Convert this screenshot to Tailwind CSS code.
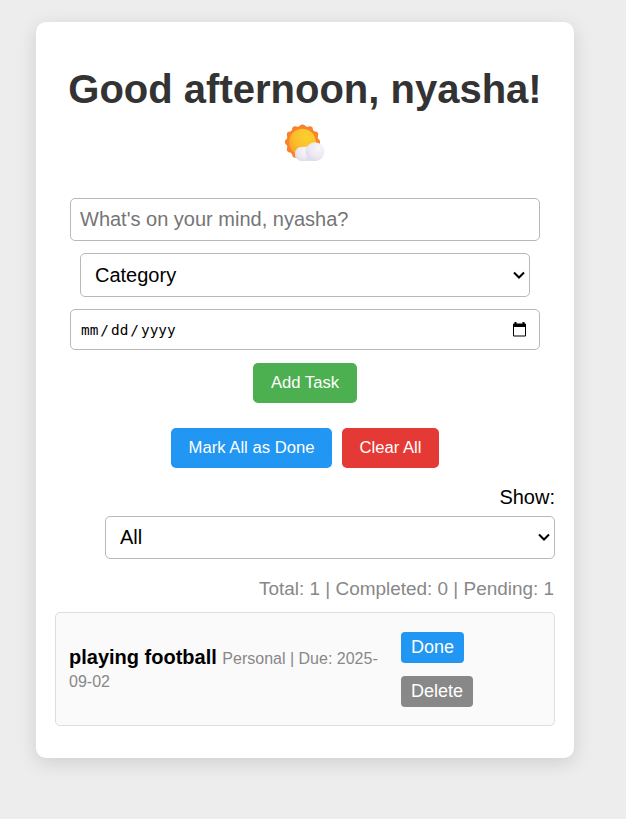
<!DOCTYPE html>
<html lang="en">
<head>
<meta charset="utf-8">
<title>To-do list</title>
<script src="https://cdn.jsdelivr.net/npm/@tailwindcss/browser@4"></script>
</head>
<body class="h-[819px] overflow-hidden bg-[#ededed] pt-[22px] pl-9 font-['Liberation_Sans',Arial,sans-serif] text-[20px] text-black">
<main class="flex h-[736px] w-[538px] flex-col rounded-[10px] bg-white px-[19px] shadow-[0_5px_19px_rgba(0,0,0,0.13)]">
  <h1 class="mt-[40px] flex flex-col items-center text-[40px] leading-[54px] font-bold whitespace-nowrap text-[#333]">
    <span>Good afternoon, nyasha!</span>
    <svg class="mt-[8px] block h-[38px] w-[42px]" viewBox="0 0 42 38">
      <defs>
        <radialGradient id="sun" cx=".65" cy=".3" r=".8"><stop offset="0" stop-color="#fdd02e"/><stop offset=".6" stop-color="#fabd2b"/><stop offset="1" stop-color="#f5a02d"/></radialGradient>
        <linearGradient id="cloud" x1="0" y1="0" x2="0" y2="1"><stop offset="0" stop-color="#f3f1f6"/><stop offset=".6" stop-color="#e7e3ef"/><stop offset="1" stop-color="#dcd5f2"/></linearGradient>
        <radialGradient id="puff" cx=".7" cy=".3" r=".85"><stop offset="0" stop-color="#f7f6f9"/><stop offset=".6" stop-color="#ebe8f0"/><stop offset="1" stop-color="#dbd5ea"/></radialGradient>
      </defs>
      <g fill="#f9822a"><circle cx="18.500" cy="18" r="16"/><circle cx="18.500" cy="3.500" r="3.100"/><circle cx="25.800" cy="5.400" r="3.100"/><circle cx="31.100" cy="10.700" r="3.100"/><circle cx="33" cy="18" r="3.100"/><circle cx="11.200" cy="5.400" r="3.100"/><circle cx="5.900" cy="10.700" r="3.100"/><circle cx="4" cy="18" r="3.100"/><circle cx="5.900" cy="25.300" r="3.100"/><circle cx="11.200" cy="30.600" r="3.100"/></g>
      <circle cx="18.500" cy="18" r="13.300" fill="url(#sun)"/>
      <path d="M17.500 37a7 7 0 0 1-6.500-7c0-4.200 3-7 6.700-7l13-1 6 12-5 3z" fill="url(#cloud)"/>
      <circle cx="18" cy="29.900" r="7" fill="url(#puff)"/>
      <path d="M18 37c5 0 5-7 10-9l8 5-3 4z" fill="#e3deef"/>
      <circle cx="31" cy="27.600" r="9.400" fill="url(#puff)"/>
    </svg>
  </h1>

  <form class="mt-[36px] flex flex-col items-center">
    <input type="text" placeholder="What's on your mind, nyasha?" class="h-[43px] w-[470px] rounded-[5px] border border-[#b8b8b8] bg-white px-[9px] text-[20px] text-black placeholder:text-[#757575]">
    <div class="mt-[12px] flex h-[44px] w-[450px] items-center justify-between rounded-[5px] border border-[#b8b8b8] pr-[4px] pl-[14px]">
      <span>Category</span>
      <svg class="h-3 w-3" viewBox="0 0 12 12" fill="none" stroke="#000" stroke-width="2"><path d="M1 3.500 6 8.500 11 3.500"/></svg>
    </div>
    <div class="mt-[12px] flex h-[41px] w-[470px] items-center justify-between rounded-[5px] border border-[#b8b8b8] pr-[12px] pl-[10px]">
      <span class="pt-[3px] font-['DejaVu_Sans_Mono',monospace] text-[14.4px]">mm<span class="px-[2px]">/</span>dd<span class="px-[2px]">/</span>yyyy</span>
      <svg class="h-4 w-[15px]" viewBox="0 0 15 16"><path d="M2.500 0h2v1.500h6V0h2v1.500h.5a1 1 0 0 1 1 1v11a1 1 0 0 1-1 1H2a1 1 0 0 1-1-1v-11a1 1 0 0 1 1-1h.5zM2 5v8.500h11V5z" fill="#000"/></svg>
    </div>
    <button type="button" class="mt-[13px] h-10 w-[104px] rounded-[5px] bg-[#4caf50] pb-[2px] text-[16.67px] text-white">Add Task</button>
  </form>

  <div class="mt-[25px] flex justify-center gap-[10px] text-[16.67px] text-white">
    <button class="h-10 w-[161px] rounded-[5px] bg-[#2196f3] pb-[2px]">Mark All as Done</button>
    <button class="h-10 w-[97px] rounded-[5px] bg-[#e53935] pb-[2px]">Clear All</button>
  </div>

  <div class="mt-[17px] flex flex-col items-end">
    <span class="leading-[24px]">Show:</span>
    <div class="mt-[7px] flex h-[43px] w-[450px] items-center justify-between rounded-[5px] border border-[#b8b8b8] pr-[4px] pb-px pl-[14px]">
      <span>All</span>
      <svg class="h-3 w-3" viewBox="0 0 12 12" fill="none" stroke="#000" stroke-width="2"><path d="M1 3.500 6 8.500 11 3.500"/></svg>
    </div>
    <p class="mt-[18px] pr-px text-[18.930px] leading-[24px] text-[#888]">Total: 1 | Completed: 0 | Pending: 1</p>
  </div>

  <div class="mt-[11px] flex h-[114px] items-center rounded-[5px] border border-[#ddd] bg-[#fafafa] pl-[13px]">
    <p class="w-[332px] leading-[23px]"><span class="font-bold">playing football</span> <span class="text-[16px] leading-none text-[#888]">Personal | Due: 2025-<br>09-02</span></p>
    <div class="flex flex-col items-start gap-[13px] text-[18px] text-white">
      <button class="h-[31px] w-[63px] rounded-[4px] bg-[#2196f3]">Done</button>
      <button class="h-[31px] w-[72px] rounded-[4px] bg-[#888]">Delete</button>
    </div>
  </div>
</main>
</body>
</html>
